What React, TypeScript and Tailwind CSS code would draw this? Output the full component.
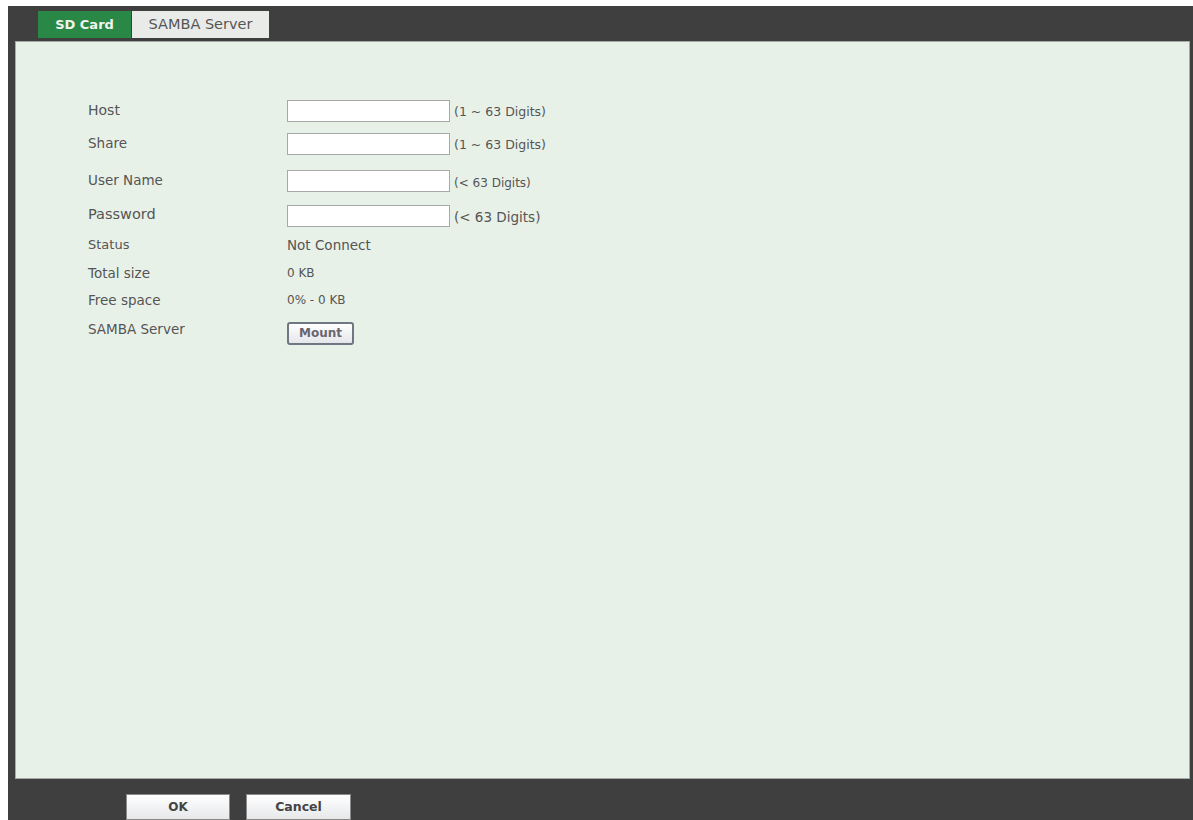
import React from "react";

const font = { fontFamily: '"DejaVu Sans", Verdana, sans-serif' };

function Row({ h, label, size, children }: { h: string; label: string; size?: string; children: React.ReactNode }) {
  return (
    <div className={`flex items-center ${h}`}>
      <div className={`w-[199px] ${size ?? "text-[13.5px]"} text-[#555] mb-[4px]`}>{label}</div>
      <div className="flex items-center">{children}</div>
    </div>
  );
}

function Field({ hint, size }: { hint: string; size: string }) {
  return (
    <>
      <input
        type="text"
        className="w-[163px] h-[22px] bg-white border border-[#a8a8a8] outline-none"
      />
      <span className={`ml-[4px] mt-[3px] text-[#555] ${size}`}>{hint}</span>
    </>
  );
}

export default function App() {
  return (
    <div className="w-[1193px] h-[820px] bg-white pt-[6px] pl-[8px] overflow-hidden" style={font}>
      <div className="h-[814px] bg-[#3f3f3f] flex flex-col">
        <div className="h-[35px] pl-[30px] pt-[5px] flex items-start">
          <div className="h-[27px] w-[93px] bg-[#2a8846] flex items-center justify-center text-[13px] font-bold text-[#eef6ee]">
            SD Card
          </div>
          <div className="h-[27px] w-[137px] ml-[1px] bg-[#e9ebe9] flex items-center justify-center text-[14.5px] text-[#555]">
            SAMBA Server
          </div>
        </div>
        <div className="ml-[7px] mr-[3px] h-[738px] bg-[#e8f1e8] border border-[#a6aaa6] pt-[58px] pl-[72px]">
          <Row h="h-[33px] items-start" label="Host" size="text-[14px]">
            <Field hint="(1 ~ 63 Digits)" size="text-[12.5px]" />
          </Row>
          <Row h="h-[37px] items-start" label="Share">
            <Field hint="(1 ~ 63 Digits)" size="text-[12.5px]" />
          </Row>
          <Row h="h-[34px] items-start" label="User Name">
            <Field hint="(< 63 Digits)" size="text-[12px]" />
          </Row>
          <Row h="h-[29px] items-start" label="Password" size="text-[14.5px]">
            <Field hint="(< 63 Digits)" size="text-[13.5px]" />
          </Row>
          <Row h="h-[28px]" label="Status" size="text-[13px]">
            <span className="text-[13.5px] text-[#555] mb-[4px]">Not Connect</span>
          </Row>
          <Row h="h-[28px]" label="Total size">
            <span className="text-[12px] text-[#555] mb-[4px]">0 KB</span>
          </Row>
          <Row h="h-[26px]" label="Free space">
            <span className="text-[12px] text-[#555] mb-[4px]">0% - 0 KB</span>
          </Row>
          <Row h="h-[32px]" label="SAMBA Server">
            <button className="w-[67px] h-[23px] mt-[4px] bg-gradient-to-b from-white to-[#e4e6ea] border-2 border-[#6f7780] rounded-[3px] text-[12px] font-bold text-[#6a6470]">
              Mount
            </button>
          </Row>
        </div>
        <div className="flex-1 pl-[118px] pt-[15px] flex items-start gap-[16px]">
          <button className="w-[104px] h-[26px] bg-gradient-to-b from-white to-[#e6e8ea] border border-[#8a8a8a] text-[12px] font-bold text-[#444]">
            OK
          </button>
          <button className="w-[105px] h-[26px] bg-gradient-to-b from-white to-[#e6e8ea] border border-[#8a8a8a] text-[12.5px] font-bold text-[#444]">
            Cancel
          </button>
        </div>
      </div>
    </div>
  );
}
